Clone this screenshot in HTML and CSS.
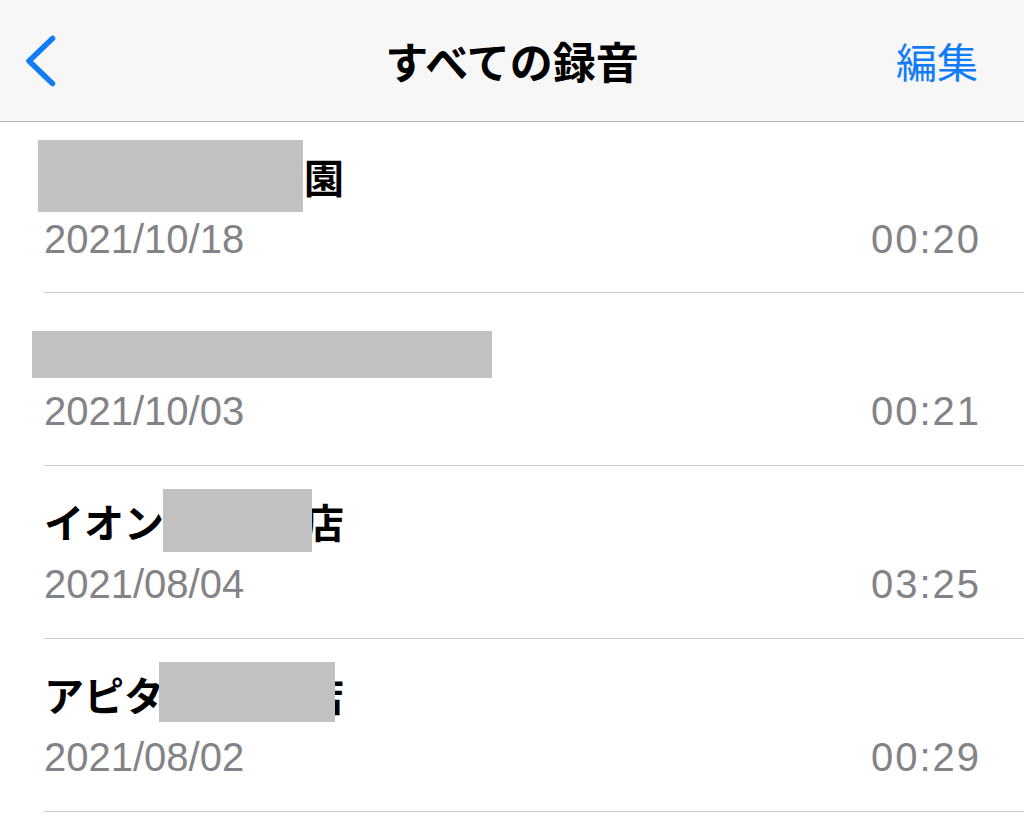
FILE: index.html
```html
<!DOCTYPE html>
<html lang="ja">
<head>
<meta charset="utf-8">
<title>すべての録音</title>
<link rel="stylesheet" href="styles.css">
</head>
<body>
<div class="screen">
  <header class="nav">
    <div class="nav-left">
      <svg class="back" viewBox="0 0 40 60" width="40" height="60" aria-hidden="true">
        <polyline points="32.5,7.5 9,30 32.5,52.5" fill="none" stroke="currentColor" stroke-width="5.5" stroke-linecap="round" stroke-linejoin="round"/>
      </svg>
    </div>
    <h1 class="nav-title">すべての録音</h1>
    <div class="nav-right"><span class="edit">編集</span></div>
  </header>
  <ul class="list">
    <li class="row">
      <div class="name"><span class="gap g-wide"></span>園</div>
      <div class="meta"><span class="date">2021/10/18</span><span class="dur">00:20</span></div>
      <span class="redact r1"></span>
    </li>
    <li class="row">
      <div class="name"><span class="gap g-full"></span></div>
      <div class="meta"><span class="date">2021/10/03</span><span class="dur">00:21</span></div>
      <span class="redact r2"></span>
    </li>
    <li class="row">
      <div class="name">イオン<span class="gap g-mid"></span>店</div>
      <div class="meta"><span class="date">2021/08/04</span><span class="dur">03:25</span></div>
      <span class="redact r3"></span>
    </li>
    <li class="row">
      <div class="name">アピタ<span class="gap g-mid"></span>店</div>
      <div class="meta"><span class="date">2021/08/02</span><span class="dur">00:29</span></div>
      <span class="redact r4"></span>
    </li>
  </ul>
</div>
</body>
</html>
```

FILE: styles.css
```css
* { box-sizing: border-box; }

html, body {
  margin: 0;
  padding: 0;
  background: #ffffff;
}

body {
  font-family: "Noto Sans CJK JP", "Liberation Sans", sans-serif;
  color: #000;
}

.screen {
  width: 1024px;
  height: 820px;
  overflow: hidden;
  background: #ffffff;
}

/* ---------- navigation bar ---------- */
.nav {
  height: 122px;
  background: #f7f7f7;
  border-bottom: 1px solid #b3b3b3;
  display: grid;
  grid-template-columns: 1fr auto 1fr;
  align-items: center;
}

.nav-left {
  display: flex;
  align-items: center;
  padding-left: 20px;
}

.back {
  display: block;
  color: #127cf6;
}

.nav-title {
  margin: 0;
  font: 700 43px/43px "Noto Sans CJK JP", sans-serif;
  color: #000;
  white-space: nowrap;
}

.nav-right {
  display: flex;
  justify-content: flex-end;
  padding-right: 46px;
}

.edit {
  font: 400 41px/41px "Noto Sans CJK JP", sans-serif;
  color: #127cf6;
}

/* ---------- list ---------- */
.list {
  list-style: none;
  margin: 0;
  padding: 0;
}

.row {
  position: relative;
  margin-left: 44px;
  padding: 27px 45px 32px 0;
  border-bottom: 1px solid #c9c8cc;
}

.row:first-child {
  padding-top: 26px;
  padding-bottom: 31px;
}

.name {
  height: 56px;
  font: 700 40px/56px "Noto Sans CJK JP", sans-serif;
  color: #000;
  white-space: nowrap;
}

.gap {
  display: inline-block;
  height: 1px;
  vertical-align: middle;
}

.g-wide { width: 260px; }
.g-mid  { width: 140px; }
.g-full { width: 400px; }

.meta {
  margin-top: 13px;
  display: flex;
  justify-content: space-between;
  font: 400 40px/44px "Liberation Sans", Arial, sans-serif;
  color: #838387;
}

.dur {
  letter-spacing: 2px;
  margin-right: -2px;
}

/* redaction overlays */
.redact {
  position: absolute;
  background: #c1c1c1;
}

.r1 { left: -6px;  top: 18px; width: 265px; height: 72px; }
.r2 { left: -12px; top: 38px; width: 460px; height: 47px; }
.r3 { left: 119px; top: 23px; width: 149px; height: 63px; }
.r4 { left: 115px; top: 23px; width: 176px; height: 60px; }
```
